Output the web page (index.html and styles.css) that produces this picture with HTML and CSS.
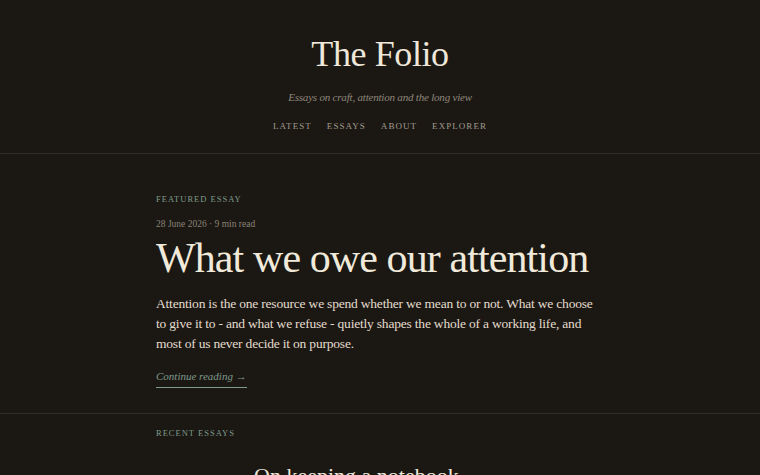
FILE: index.html
```html
<!DOCTYPE html>
<html>
<head>
    <meta charset="utf-8" />
    <title>The Folio</title>
    <meta name="viewport" content="width=device-width, initial-scale=1.0" />
    <link rel="stylesheet" href="styles.css">
</head>
<body>

<!-- Masthead -->
<header class="masthead">
    <h1 class="site-title">The Folio</h1>
    <p class="tagline">Essays on craft, attention and the long view</p>
    <nav class="site-nav">
        <a href="#latest">Latest</a>
        <a href="#essays">Essays</a>
        <a href="#about">About</a>
        <a href="#explorer">Explorer</a>
    </nav>
</header>

<!-- Featured essay -->
<section class="featured">
    <div class="column">
        <p class="kicker">Featured essay</p>
        <p class="meta">28 June 2026 · 9 min read</p>
        <h2 class="headline">What we owe our attention</h2>
        <p class="lede">Attention is the one resource we spend whether we mean to or not. What we choose to give it to - and what we refuse - quietly shapes the whole of a working life, and most of us never decide it on purpose.</p>
        <a href="#" class="more">Continue reading →</a>
    </div>
</section>

<!-- Recent essays -->
<section class="recent">
    <div class="column">
        <p class="kicker">Recent essays</p>
        <ul class="essay-list">
            <li class="essay">
                <span class="essay-date">14 June 2026</span>
                <a href="#" class="essay-title">On keeping a notebook</a>
            </li>
        </ul>
    </div>
</section>

</body>
</html>
```

FILE: styles.css
```css
/* Base */
html, body {
    margin: 0;
    background-color: #1b1814;
    color: #efe8da;
    font-family: "Liberation Serif", "DejaVu Serif", serif;
}

a {
    color: inherit;
    text-decoration: none;
}

p, h1, h2 {
    margin: 0;
}

/* Masthead */
.masthead {
    display: flex;
    flex-direction: column;
    align-items: center;
    padding: 32px 0 22px;
    border-bottom: 1px solid #2f2b25;
}

.site-title {
    font-size: 36px;
    font-weight: normal;
    line-height: 44px;
    letter-spacing: -0.4px;
}

.tagline {
    margin-top: 15px;
    font-size: 11px;
    font-style: italic;
    letter-spacing: -0.2px;
    color: #8f877b;
}

.site-nav {
    display: flex;
    gap: 15px;
    margin-top: 18px;
}

.site-nav a {
    font-size: 9px;
    letter-spacing: 1.05px;
    text-transform: uppercase;
    color: #a39b8e;
}

/* Shared column */
.column {
    width: 448px;
    margin: 0 auto;
}

.kicker {
    font-size: 8.5px;
    letter-spacing: 1px;
    text-transform: uppercase;
    color: #7f9a8b;
}

/* Featured */
.featured {
    padding: 40px 0 25px;
    border-bottom: 1px solid #2f2b25;
}

.meta {
    margin-top: 15px;
    font-size: 9.5px;
    color: #8a8277;
}

.headline {
    margin-top: 5px;
    font-size: 42px;
    font-weight: normal;
    line-height: 48px;
    letter-spacing: -0.9px;
    color: #f1eadb;
}

.lede {
    margin-top: 12px;
    font-size: 13.5px;
    line-height: 20px;
    letter-spacing: -0.2px;
    color: #e4dccd;
}

.more {
    display: inline-block;
    margin-top: 16px;
    padding-bottom: 5px;
    border-bottom: 1px solid #7f9a8b;
    font-size: 11px;
    font-style: italic;
    color: #7f9a8b;
}

/* Recent */
.recent {
    padding-top: 14px;
}

.essay-list {
    list-style: none;
    margin: 25px 0 0;
    padding: 0;
}

.essay {
    display: grid;
    grid-template-columns: 86px 1fr;
    column-gap: 12px;
    align-items: baseline;
}

.essay-date {
    font-size: 9.5px;
    color: #1b1814;
}

.essay-title {
    font-size: 22px;
    color: #efe8da;
}
```
